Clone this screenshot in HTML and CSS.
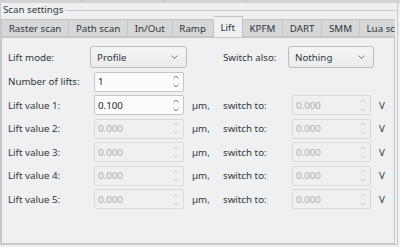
FILE: index.html
```html
<!DOCTYPE html>
<html lang="en">
<head>
    <meta charset="UTF-8">
    <meta name="viewport" content="width=device-width, initial-scale=1.0">
    <title>Scan settings</title>
    <link rel="stylesheet" href="styles.css">
</head>
<body>
    <div class="topstrip">
        <span></span>
        <span></span>
        <span></span>
    </div>

    <div class="group">
        <div class="group-head">
            <span class="group-title">Scan settings</span>
            <span class="group-rule"></span>
        </div>

        <div class="tabs">
            <span class="tab">Raster scan</span>
            <span class="tab">Path scan</span>
            <span class="tab">In/Out</span>
            <span class="tab">Ramp</span>
            <span class="tab active">Lift</span>
            <span class="tab">KPFM</span>
            <span class="tab">DART</span>
            <span class="tab">SMM</span>
            <span class="tab last">Lua script</span>
        </div>

        <div class="panel">
            <div class="form">
                <!-- row 1: combos -->
                <span class="label">Lift mode:</span>
                <div class="combo">
                    <span>Profile</span>
                    <svg class="chev" width="7" height="4" viewBox="0 0 7 4"><path d="M0.5 0.5 L3.5 3.5 L6.5 0.5"/></svg>
                </div>
                <span></span>
                <span class="label">Switch also:</span>
                <div class="combo">
                    <span>Nothing</span>
                    <svg class="chev" width="7" height="4" viewBox="0 0 7 4"><path d="M0.5 0.5 L3.5 3.5 L6.5 0.5"/></svg>
                </div>
                <span></span>

                <!-- row 2 -->
                <span class="label">Number of lifts:</span>
                <div class="spin">
                    <span>1</span>
                    <div class="arrows">
                        <svg width="6" height="4" viewBox="0 0 6 4"><path d="M0.5 3.5 L3 1 L5.5 3.5"/></svg>
                        <svg width="6" height="4" viewBox="0 0 6 4"><path d="M0.5 0.5 L3 3 L5.5 0.5"/></svg>
                    </div>
                </div>
                <span></span><span></span><span></span><span></span>
            </div>
            <div class="form rows" id="lift-rows"></div>
        </div>
    </div>

    <script>
        const rows = document.getElementById('lift-rows');
        const arrows = '<div class="arrows">' +
            '<svg width="6" height="4" viewBox="0 0 6 4"><path d="M0.5 3.5 L3 1 L5.5 3.5"/></svg>' +
            '<svg width="6" height="4" viewBox="0 0 6 4"><path d="M0.5 0.5 L3 3 L5.5 0.5"/></svg>' +
            '</div>';

        for (let i = 1; i <= 5; i++) {
            const enabled = i === 1 ? '' : ' disabled';
            const value = i === 1 ? '0.100' : '0.000';
            rows.innerHTML +=
                `<span class="label">Lift value ${i}:</span>` +
                `<div class="spin${enabled}"><span>${value}</span>${arrows}</div>` +
                `<span class="unit">µm,</span>` +
                `<span class="label">switch to:</span>` +
                `<div class="spin narrow disabled"><span>0.000</span>${arrows}</div>` +
                `<span class="unit">V</span>`;
        }
    </script>
</body>
</html>
```

FILE: styles.css
```css
body {
    margin: 0;
    width: 400px;
    height: 247px;
    overflow: hidden;
    background-color: #eff0f1;
    font-family: 'Noto Sans', sans-serif;
    font-size: 9.75px;
    color: #31363b;
}

.topstrip {
    display: flex;
    height: 3px;
    background-color: #d2d3d4;
}

.topstrip span {
    width: 81px;
    border-right: 1px solid #bfc1c3;
}

.group {
    border-left: 1px solid #c9cacb;
    border-right: 1px solid #c9cacb;
    border-bottom: 1px solid #c9cacb;
    width: 398px;
    box-sizing: border-box;
    margin-right: 1px;
}

.group-head {
    display: flex;
    align-items: center;
    height: 13px;
    margin-left: 2px;
}

.group-title {
    padding-right: 2px;
    line-height: 13px;
}

.group-rule {
    flex: 1;
    height: 1px;
    background-color: #c9cacb;
    margin-top: 1px;
}

.tabs {
    display: flex;
    align-items: flex-end;
    height: 21px;
    overflow: hidden;
    margin-right: 2px;
}

.tab {
    height: 18px;
    line-height: 17px;
    padding: 0 6.75px;
    box-sizing: border-box;
    background-color: #d6d7d8;
    border: 1px solid #c3c5c7;
    border-left: none;
    white-space: nowrap;
}

.tab:first-child {
    border-left: 1px solid #c3c5c7;
}

.tab.active {
    height: 22px;
    line-height: 21px;
    background-color: #eff0f1;
    border-bottom: none;
    margin-bottom: -1px;
    position: relative;
    z-index: 1;
}

.tab.last {
    border-right: none;
}

.panel {
    height: 207px;
    box-sizing: border-box;
    border: 1px solid #c3c5c7;
    margin-right: 2px;
    padding: 8px 0 0 6px;
}

.form {
    display: grid;
    grid-template-columns: 82px 97px 36px 65px 86px auto;
    grid-template-rows: 22px 20px;
    row-gap: 3.5px;
    align-items: center;
}

.form.rows {
    grid-template-rows: repeat(5, 20px);
    margin-top: 3.5px;
}

.label {
    white-space: nowrap;
}

.unit {
    padding-left: 5px;
}

.combo {
    height: 22px;
    box-sizing: border-box;
    border: 1px solid #bcbec0;
    border-radius: 3px;
    background: linear-gradient(#f4f5f5, #eaebec);
    display: flex;
    align-items: center;
    justify-content: space-between;
    padding: 0 8px 0 6px;
}

.chev path {
    fill: none;
    stroke: #6e7175;
    stroke-width: 1;
}

.spin {
    height: 20px;
    width: 90px;
    margin-left: 4px;
    box-sizing: border-box;
    border: 1px solid #c3c5c7;
    border-radius: 2px;
    background-color: #fcfcfc;
    display: flex;
    align-items: center;
    justify-content: space-between;
    padding: 0 4px 0 3px;
    color: #232627;
}

.spin.narrow {
    width: 79px;
}

.spin.disabled {
    background-color: #eff0f1;
    border-color: #d9dadb;
    color: #a9abad;
}

.arrows {
    display: flex;
    flex-direction: column;
    gap: 5px;
}

.arrows svg {
    display: block;
}

.arrows path {
    fill: none;
    stroke: #7c7f83;
    stroke-width: 1;
}

.spin.disabled .arrows path {
    stroke: #c8cacc;
}
```
